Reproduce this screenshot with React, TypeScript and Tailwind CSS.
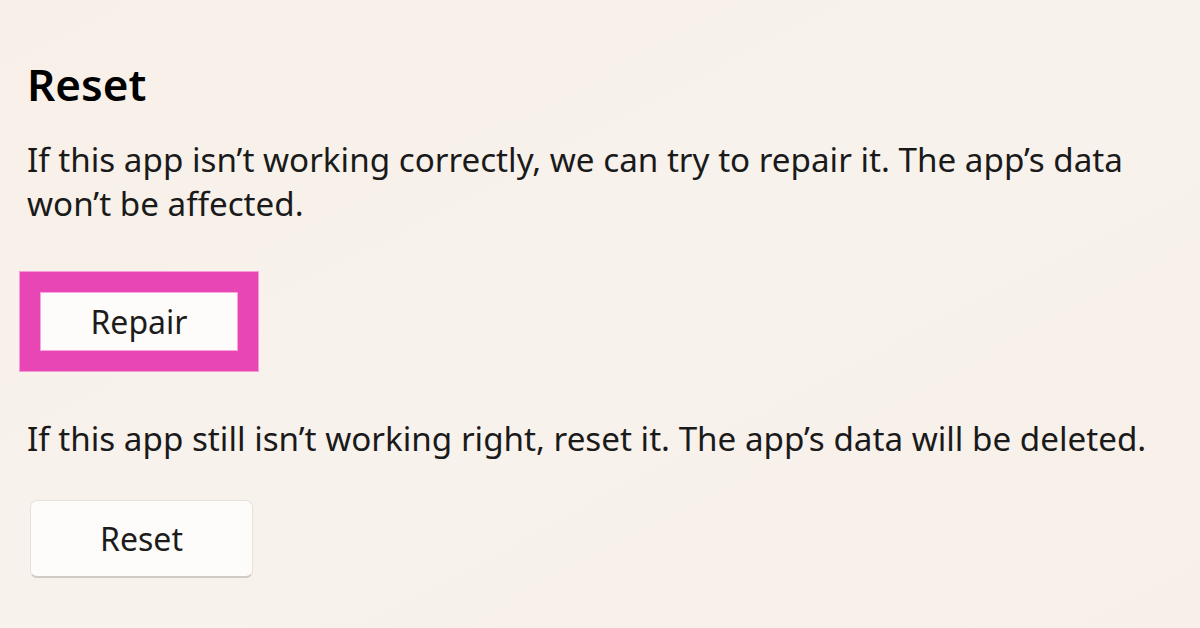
export default function App() {
  return (
    <div
      className="w-[1200px] h-[628px] overflow-hidden bg-gradient-to-br from-[#f8f0e8] via-[#f8f2ed] to-[#f8f0e8] text-[#1a1a1a]"
      style={{ fontFamily: '"Noto Sans", "Open Sans", sans-serif' }}
    >
      <div className="flex flex-col items-start pl-[27px] pt-[55px]">
        <h1 className="text-[44px] leading-[58px] font-semibold text-black">Reset</h1>
        <p className="mt-[25px] w-[1160px] text-[33.2px] leading-[44px]">
          If this app isn’t working correctly, we can try to repair it. The app’s data
          <br />
          won’t be affected.
        </p>

        {/* highlighted repair button */}
        <div className="mt-[45px] -ml-[8px] border border-[#f59bd6] bg-[#e845b5] p-[20px]">
          <button className="w-[198px] h-[59px] border border-[#f7a6db] bg-[#fefcfb] text-[32px] text-[#1c1c1c]">
            Repair
          </button>
        </div>

        <p className="mt-[45px] text-[33.2px] leading-[44px]">
          If this app still isn’t working right, reset it. The app’s data will be deleted.
        </p>

        <button className="mt-[39px] ml-[3px] w-[223px] h-[78px] rounded-[7px] border border-[#e8e1db] border-b-[#d2cbc5] border-b-2 bg-[#fefcfa] text-[32px] text-[#1c1c1c]">
          Reset
        </button>
      </div>
    </div>
  );
}
